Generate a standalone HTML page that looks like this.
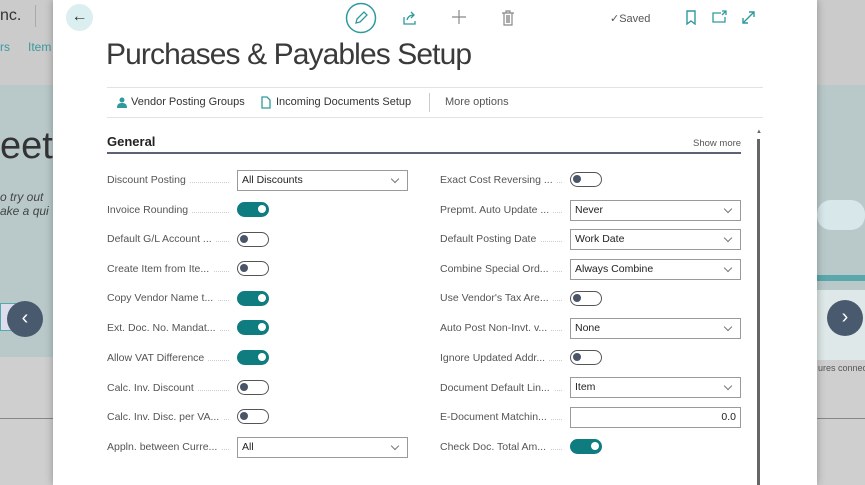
<!DOCTYPE html>
<html><head><meta charset="utf-8"><style>
*{margin:0;padding:0;box-sizing:border-box}
body{width:865px;height:485px;overflow:hidden;position:relative;font-family:"Liberation Sans",sans-serif;background:#cdcdcd}
.a{position:absolute}
.lbl{position:absolute;font-size:10.5px;color:#555;white-space:nowrap;width:128px;overflow:hidden}
.lbl span{background:#fff;padding-right:4px;position:relative;z-index:1}
.lbl:after{content:"";position:absolute;left:0;right:6px;top:8px;border-bottom:1px dotted #ccc}
.dd{position:absolute;height:21px;border:1px solid #9a9a9a;background:#fff;font-size:10.5px;color:#222;padding:3px 4px;width:171px}
.dd:after{content:"";position:absolute;right:9px;top:5px;width:5px;height:5px;border-right:1px solid #777;border-bottom:1px solid #777;transform:rotate(45deg)}
.dd.num:after{display:none}
.tg{position:absolute;width:32px;height:15px;border-radius:8px;border:1.5px solid #555;background:#fff}
.tg:after{content:"";position:absolute;left:2px;top:2px;width:8px;height:8px;border-radius:50%;background:#4a5568}
.tg.on{background:#0f7c80;border-color:#0f7c80}
.tg.on:after{left:auto;right:2px;background:#fff}
</style></head><body>
<div class="a" style="left:0;top:0;width:865px;height:85px;background:#cbcbcb"></div>
<div class="a" style="left:0;top:85px;width:865px;height:272px;background:#b9c9ca"></div>
<div class="a" style="left:0;top:357px;width:865px;height:128px;background:#cfcfcf"></div>
<div class="a" style="left:0;top:418px;width:865px;height:1px;background:#888"></div>
<div class="a" style="left:0;top:7px;font-size:16px;color:#333">nc.</div>
<div class="a" style="left:35px;top:5px;width:1px;height:22px;background:#aaa"></div>
<div class="a" style="left:0;top:40px;font-size:12px;color:#3a9aa0">rs</div>
<div class="a" style="left:28px;top:40px;font-size:12px;color:#3a9aa0">Item</div>
<div class="a" style="left:0;top:125px;font-size:38px;color:#333">eet</div>
<div class="a" style="left:0;top:190px;font-size:12px;color:#444;font-style:italic">o try out<br>ake a qui</div>
<div class="a" style="left:0;top:303px;width:30px;height:28px;border:1px solid #5aa;background:#dde"></div>
<div class="a" style="left:7px;top:301px;width:36px;height:36px;border-radius:50%;background:#4a5a6e;color:#fff;font-size:20px;text-align:center;line-height:34px">‹</div>
<div class="a" style="left:817px;top:200px;width:48px;height:30px;background:#d8e8ea;border-radius:14px"></div>
<div class="a" style="left:817px;top:275px;width:48px;height:6px;background:#5aa8ac"></div>
<div class="a" style="left:817px;top:290px;width:48px;height:70px;background:#dfe8e8"></div>
<div class="a" style="left:827px;top:300px;width:36px;height:36px;border-radius:50%;background:#4a5a6e;color:#fff;font-size:20px;text-align:center;line-height:34px">›</div>
<div class="a" style="left:818px;top:363px;font-size:9px;color:#555;white-space:nowrap">ures connec</div>
<div class="a" style="left:53px;top:0;width:764px;height:485px;background:#fff;box-shadow:0 0 8px rgba(0,0,0,.3)"></div>
<div class="a" style="left:66px;top:4px;width:27px;height:27px;border-radius:50%;background:#dbeef0;color:#333;font-size:16px;text-align:center;line-height:25px">←</div>
<svg class="a" style="left:345px;top:2px" width="32" height="32"><circle cx="16" cy="16" r="14.5" fill="none" stroke="#2f9a9e" stroke-width="1.5"/><path d="M11 21l1-4 7-7 3 3-7 7z" fill="none" stroke="#2f9a9e" stroke-width="1.3"/></svg>
<svg class="a" style="left:402px;top:10px" width="16" height="16"><path d="M2 7v7h11v-3M5 10c1-4 4-5 7-5M9 2l3 3-3 3" fill="none" stroke="#2f9a9e" stroke-width="1.3"/></svg>
<svg class="a" style="left:452px;top:10px" width="14" height="14"><path d="M7 0v14M0 7h14" stroke="#888" stroke-width="1.2"/></svg>
<svg class="a" style="left:501px;top:10px" width="14" height="16"><path d="M1 3h12M5 3V1h4v2M3 3v12h8V3" fill="none" stroke="#888" stroke-width="1.2"/><rect x="5" y="5" width="4" height="8" fill="#aaa"/></svg>
<div class="a" style="left:610px;top:12px;font-size:11px;color:#555">✓Saved</div>
<svg class="a" style="left:685px;top:10px" width="12" height="15"><path d="M2 1h8v13l-4-3-4 3z" fill="none" stroke="#2f9a9e" stroke-width="1.4"/></svg>
<svg class="a" style="left:712px;top:10px" width="16" height="14"><path d="M9 3H1v9h12V7M10 1h4v4M14 1l-4 4" fill="none" stroke="#2f9a9e" stroke-width="1.3"/></svg>
<svg class="a" style="left:741px;top:10px" width="15" height="15"><path d="M2 13L13 2M8 2h5v5M2 8v5h5" fill="none" stroke="#2f9a9e" stroke-width="1.4"/></svg>
<div class="a" style="left:106px;top:38px;font-size:30px;color:#3a3a3a;letter-spacing:-0.9px;white-space:nowrap">Purchases &amp; Payables Setup</div>
<div class="a" style="left:107px;top:87px;width:656px;height:1px;background:#e2e2e2"></div>
<div class="a" style="left:107px;top:117px;width:656px;height:1px;background:#e2e2e2"></div>
<svg class="a" style="left:117px;top:97px" width="10" height="11"><circle cx="5" cy="3" r="2.5" fill="#2f9a9e"/><path d="M0 11c0-4 2-5 5-5s5 1 5 5z" fill="#2f9a9e"/></svg>
<div class="a" style="left:131px;top:96px;font-size:11px;color:#333">Vendor Posting Groups</div>
<svg class="a" style="left:261px;top:96px" width="10" height="13"><path d="M1 1h5l3 3v8H1z" fill="none" stroke="#2f9a9e" stroke-width="1.3"/></svg>
<div class="a" style="left:276px;top:96px;font-size:11px;color:#333">Incoming Documents Setup</div>
<div class="a" style="left:429px;top:93px;width:1px;height:19px;background:#ccc"></div>
<div class="a" style="left:445px;top:96px;font-size:11px;color:#555">More options</div>
<div class="a" style="left:107px;top:134px;font-size:13px;font-weight:bold;color:#222">General</div>
<div class="a" style="left:693px;top:138px;font-size:9.5px;color:#555">Show more</div>
<div class="a" style="left:107px;top:152px;width:634px;height:2px;background:#5a6372"></div>
<div class="a" style="left:757px;top:139px;width:3px;height:346px;background:#666"></div>
<div class="a" style="left:756px;top:129px;font-size:6px;color:#666">▲</div>

<div class="lbl" style="left:107px;top:174px"><span>Discount Posting</span></div><div class="dd" style="left:237px;top:170px">All Discounts</div>
<div class="lbl" style="left:107px;top:204px"><span>Invoice Rounding</span></div><div class="tg on" style="left:237px;top:202px"></div>
<div class="lbl" style="left:107px;top:233px"><span>Default G/L Account ...</span></div><div class="tg" style="left:237px;top:232px"></div>
<div class="lbl" style="left:107px;top:263px"><span>Create Item from Ite...</span></div><div class="tg" style="left:237px;top:261px"></div>
<div class="lbl" style="left:107px;top:292px"><span>Copy Vendor Name t...</span></div><div class="tg on" style="left:237px;top:291px"></div>
<div class="lbl" style="left:107px;top:322px"><span>Ext. Doc. No. Mandat...</span></div><div class="tg on" style="left:237px;top:320px"></div>
<div class="lbl" style="left:107px;top:352px"><span>Allow VAT Difference</span></div><div class="tg on" style="left:237px;top:350px"></div>
<div class="lbl" style="left:107px;top:382px"><span>Calc. Inv. Discount</span></div><div class="tg" style="left:237px;top:380px"></div>
<div class="lbl" style="left:107px;top:411px"><span>Calc. Inv. Disc. per VA...</span></div><div class="tg" style="left:237px;top:409px"></div>
<div class="lbl" style="left:107px;top:441px"><span>Appln. between Curre...</span></div><div class="dd" style="left:237px;top:437px">All</div>

<div class="lbl" style="left:440px;top:174px"><span>Exact Cost Reversing ...</span></div><div class="tg" style="left:570px;top:172px"></div>
<div class="lbl" style="left:440px;top:204px"><span>Prepmt. Auto Update ...</span></div><div class="dd" style="left:570px;top:200px">Never</div>
<div class="lbl" style="left:440px;top:233px"><span>Default Posting Date</span></div><div class="dd" style="left:570px;top:229px">Work Date</div>
<div class="lbl" style="left:440px;top:263px"><span>Combine Special Ord...</span></div><div class="dd" style="left:570px;top:259px">Always Combine</div>
<div class="lbl" style="left:440px;top:292px"><span>Use Vendor's Tax Are...</span></div><div class="tg" style="left:570px;top:291px"></div>
<div class="lbl" style="left:440px;top:322px"><span>Auto Post Non-Invt. v...</span></div><div class="dd" style="left:570px;top:318px">None</div>
<div class="lbl" style="left:440px;top:352px"><span>Ignore Updated Addr...</span></div><div class="tg" style="left:570px;top:350px"></div>
<div class="lbl" style="left:440px;top:382px"><span>Document Default Lin...</span></div><div class="dd" style="left:570px;top:377px">Item</div>
<div class="lbl" style="left:440px;top:411px"><span>E-Document Matchin...</span></div><div class="dd num" style="left:570px;top:407px;text-align:right">0.0</div>
<div class="lbl" style="left:440px;top:441px"><span>Check Doc. Total Am...</span></div><div class="tg on" style="left:570px;top:439px"></div>
</body></html>
